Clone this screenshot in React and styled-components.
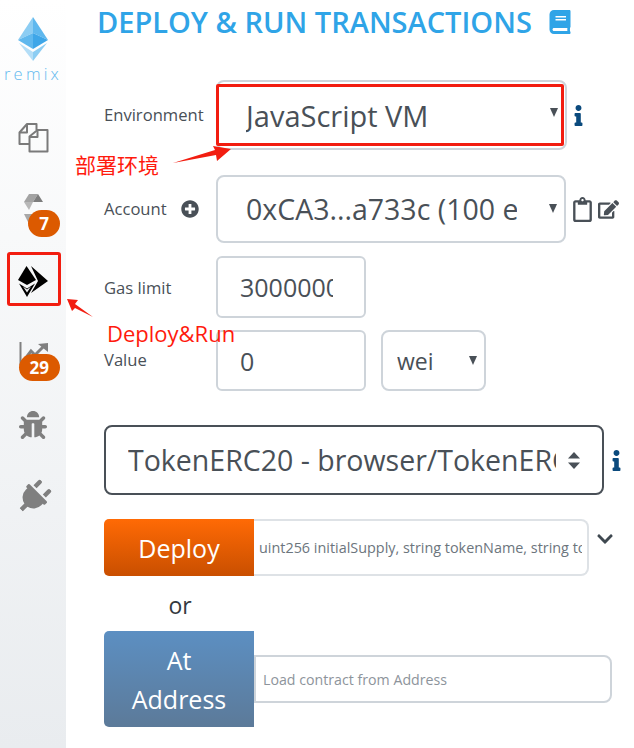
import React from 'react';
import styled, { createGlobalStyle } from 'styled-components';
import {
  FaBook,
  FaBug,
  FaChevronDown,
  FaEdit,
  FaInfo,
  FaPlug,
  FaPlusCircle,
  FaRegClipboard,
} from 'react-icons/fa';

const GlobalStyle = createGlobalStyle`
  html, body {
    margin: 0;
    padding: 0;
    background: #fff;
    font-family: "Open Sans", "Noto Sans CJK SC", sans-serif;
    color: #495057;
  }
  * { box-sizing: border-box; }
`;

const Page = styled.div`
  position: relative;
  display: flex;
  width: 634px;
  height: 748px;
  overflow: hidden;
`;

const Sidebar = styled.nav`
  width: 66px;
  flex: none;
  background: linear-gradient(180deg, #ffffff 0%, #e9ecef 100%);
`;

const Logo = styled.div`
  height: 101px;
  padding-top: 17px;
  display: flex;
  flex-direction: column;
  align-items: center;
`;

const LogoText = styled.div`
  margin-top: 3px;
  font-size: 16.5px;
  line-height: 20px;
  letter-spacing: 3.2px;
  font-weight: 300;
  color: #63b9ee;
`;

const NavItem = styled.div`
  position: relative;
  height: 72px;
  display: flex;
  align-items: center;
  justify-content: center;
  color: #7f7f7f;
  font-size: ${p => p.$size || 30}px;
`;

const PlugIcon = styled(FaPlug)`
  transform: rotate(45deg);
`;

const DeploySvg = styled.svg`
  margin-top: 2px;
`;

const Badge = styled.span`
  position: absolute;
  right: 6px;
  top: 37px;
  height: 27px;
  min-width: 32px;
  padding: 0 11px;
  border-radius: 14px;
  background: #dc5a00;
  color: #fff;
  font-size: 17px;
  font-weight: 700;
  line-height: 27px;
  text-align: center;
`;

const ActiveBox = styled.div`
  position: absolute;
  left: 7px;
  top: 7px;
  width: 54px;
  height: 54px;
  border: 3px solid #f21d10;
  border-radius: 3px;
`;

const Main = styled.main`
  flex: 1;
  padding-left: 38px;
  min-width: 0;
`;

const Title = styled.h1`
  margin: 0 0 0 -7px;
  height: 43px;
  display: flex;
  align-items: center;
  gap: 16px;
  color: #2fa4e7;
  font-size: 29px;
  font-weight: 600;
  line-height: 43px;
  white-space: nowrap;

  svg {
    font-size: 24px;
  }
`;

const Row = styled.div`
  display: flex;
  align-items: center;
  margin-top: ${p => p.$mt}px;
`;

const Label = styled.label`
  width: 112px;
  flex: none;
  display: flex;
  align-items: center;
  gap: 14px;
  font-size: 16.6px;
  line-height: 20px;
  color: #495057;
  transform: translateY(${p => p.$shift || 0}px);

  svg {
    font-size: 18px;
  }
`;

const SelectBox = styled.div`
  position: relative;
  width: ${p => p.$w}px;
  height: ${p => p.$h}px;
  flex: none;
  display: flex;
  align-items: center;
  padding-left: ${p => p.$pad}px;
  padding-right: ${p => p.$padRight || 34}px;
  border: 2px solid ${p => p.$dark ? '#495057' : '#ced4da'};
  border-radius: 8px;
  background: #fff;
  font-size: ${p => p.$fs || 29}px;
  color: #495057;
  white-space: nowrap;
`;

const SelectText = styled.span`
  display: block;
  overflow: hidden;
  white-space: nowrap;
`;

const Caret = styled.span`
  position: absolute;
  right: 7px;
  top: ${p => p.$top || 26}px;
  width: 0;
  height: 0;
  border-left: 4.5px solid transparent;
  border-right: 4.5px solid transparent;
  border-top: 9px solid #495057;
`;

const SortCaret = styled.span`
  position: absolute;
  right: 22px;
  top: 25px;
  display: flex;
  color: #495057;
`;

const TextInput = styled.input`
  width: ${p => p.$w}px;
  height: ${p => p.$h}px;
  flex: none;
  padding: 0 31px 0 22px;
  border: 2px solid #ced4da;
  border-radius: 6px;
  background: #fff;
  font-family: inherit;
  font-size: 25px;
  color: #495057;
  outline: none;
`;

const UnitGap = styled.div`
  width: 15px;
  flex: none;
`;

const SideIcons = styled.div`
  display: flex;
  align-items: center;
  gap: 3px;
  margin-left: 4px;
  color: #495057;
`;

const ClipboardIcon = styled(FaRegClipboard)`
  font-size: 25px;
`;

const EditIcon = styled(FaEdit)`
  font-size: 21px;
`;

const InfoIcon = styled(FaInfo)`
  margin-left: ${p => p.$ml}px;
  font-size: 21px;
  color: #0b4a7d;
`;

const ActionButton = styled.button`
  width: 150px;
  height: ${p => p.$h}px;
  flex: none;
  border: none;
  border-radius: 5px 0 0 5px;
  padding: 2px 20px 0;
  background: ${p => p.$bg};
  color: #fff;
  font-family: inherit;
  font-size: 25px;
  line-height: 39px;
`;

const ArgsInput = styled.input`
  width: ${p => p.$w}px;
  height: ${p => p.$h}px;
  flex: none;
  border: 2px solid ${p => p.$border};
  border-left: ${p => p.$noLeft ? 'none' : `2px solid ${p.$border}`};
  border-radius: 0 8px 8px 0;
  padding: 0 5px 0 ${p => p.$pad}px;
  background: #fff;
  font-family: inherit;
  font-size: ${p => p.$fs}px;
  outline: none;
  color: #6c757d;

  &::placeholder {
    color: #8d949b;
    opacity: 1;
  }
`;

const Chevron = styled(FaChevronDown)`
  align-self: flex-start;
  margin: 11px 0 0 7px;
  font-size: 18px;
  color: #3f4850;
`;

const OrText = styled.div`
  width: 150px;
  height: 55px;
  padding-left: 2px;
  text-align: center;
  font-size: 23px;
  line-height: 59px;
  color: #343a40;
`;

const RedBox = styled.div`
  position: absolute;
  left: 216px;
  top: 84px;
  width: 348px;
  height: 62px;
  border: 3px solid #f21d10;
  border-radius: 2px;
`;

const Note = styled.span`
  position: absolute;
  left: ${p => p.$x}px;
  top: ${p => p.$y}px;
  color: #ff1a0d;
  font-size: ${p => p.$fs}px;
  line-height: 28px;
  white-space: nowrap;
`;

const ArrowLayer = styled.svg`
  position: absolute;
  left: 0;
  top: 0;
  pointer-events: none;
`;

function EthLogo() {
  return (
    <svg width="30" height="44" viewBox="0 0 30 44">
      <polygon points="15,0 0,23 15,16" fill="#8ccdf3" />
      <polygon points="15,0 30,23 15,16" fill="#5fb8ee" />
      <polygon points="15,16 0,23 15,32" fill="#5fb8ee" />
      <polygon points="15,16 30,23 15,32" fill="#3ea6e8" />
      <polygon points="1,26 15,44 15,35" fill="#b4def7" />
      <polygon points="29,26 15,44 15,35" fill="#8ccdf3" />
    </svg>
  );
}

function CopyIcon() {
  return (
    <svg width="31" height="31" viewBox="0 0 31 31" fill="none" stroke="#7a7a7a" strokeWidth="2" strokeLinejoin="round">
      <path d="M18.5 8V2H9L1.5 10.5V22H11" />
      <path d="M9 2.5V10.5H1.5" />
      <path d="M11.5 14.5L19.5 8H29.5V29.5H11.5Z" />
      <path d="M19.5 8V15H11.5" />
    </svg>
  );
}

function SolidityIcon() {
  return (
    <svg width="19" height="30" viewBox="0 0 19 30">
      <polygon points="5,0 14,0 9,8 0,8" fill="#a3a3a3" />
      <polygon points="14,0 19,8 9,8" fill="#7d7d7d" />
      <polygon points="0,8 9,8 5,16" fill="#b8b8b8" />
      <polygon points="0,20 10,20 5,30" fill="#a8a8a8" />
      <polygon points="10,20 19,20 14,30" fill="#8b8b8b" />
    </svg>
  );
}

function DeployIcon() {
  return (
    <DeploySvg width="31" height="32" viewBox="7 12 31 32">
      <polygon points="15.5,12 7,26 16,31 25,26" fill="#000" />
      <polygon points="8,29.5 16,34.5 24,29.5 16,43" fill="#000" />
      <polygon points="12,32.5 16,35.5 20,32.5 16,38.5" fill="#f0f1f3" />
      <polygon points="20,12 37,27 20,39 27,27" fill="#000" />
    </DeploySvg>
  );
}

function AnalysisIcon() {
  return (
    <svg width="29" height="23" viewBox="0 0 29 23" fill="none">
      <path d="M1.5 0V23" stroke="#808080" strokeWidth="2" />
      <path d="M6 17L12 9L16 13L24 5" stroke="#808080" strokeWidth="3" />
      <polygon points="19,2 29,1 29,10" fill="#808080" />
    </svg>
  );
}

function SortIcon() {
  return (
    <svg width="12" height="17" viewBox="0 0 12 17">
      <polygon points="6,0 12,6.5 0,6.5" fill="currentColor" />
      <polygon points="0,10.5 12,10.5 6,17" fill="currentColor" />
    </svg>
  );
}

export default function App() {
  return (
    <Page>
      <GlobalStyle />
      <Sidebar>
        <Logo>
          <EthLogo />
          <LogoText>remix</LogoText>
        </Logo>
        <NavItem><CopyIcon /></NavItem>
        <NavItem>
          <SolidityIcon />
          <Badge>7</Badge>
        </NavItem>
        <NavItem>
          <DeployIcon />
          <ActiveBox />
        </NavItem>
        <NavItem>
          <AnalysisIcon />
          <Badge>29</Badge>
        </NavItem>
        <NavItem $size={28}><FaBug /></NavItem>
        <NavItem $size={35}><PlugIcon /></NavItem>
      </Sidebar>

      <Main>
        <Title>
          DEPLOY &amp; RUN TRANSACTIONS
          <FaBook />
        </Title>

        <Row $mt={37}>
          <Label>Environment</Label>
          <SelectBox $w={351} $h={70} $pad={28}>
            <SelectText>JavaScript VM</SelectText>
            <Caret $top={26} />
          </SelectBox>
          <InfoIcon $ml={1} />
        </Row>

        <Row $mt={25}>
          <Label>Account <FaPlusCircle /></Label>
          <SelectBox $w={350} $h={68} $pad={28} $padRight={47} $fs={28.5}>
            <SelectText>0xCA3...a733c (100 ether)</SelectText>
            <Caret $top={27} />
          </SelectBox>
          <SideIcons>
            <ClipboardIcon />
            <EditIcon />
          </SideIcons>
        </Row>

        <Row $mt={13}>
          <Label $shift={1}>Gas limit</Label>
          <TextInput $w={150} $h={62} readOnly value="3000000" />
        </Row>

        <Row $mt={12}>
          <Label $shift={-1}>Value</Label>
          <TextInput $w={150} $h={61} readOnly value="0" />
          <UnitGap />
          <SelectBox $w={105} $h={61} $pad={14} $fs={23}>
            <SelectText>wei</SelectText>
            <Caret $top={24} />
          </SelectBox>
        </Row>

        <Row $mt={34}>
          <SelectBox $w={500} $h={70} $pad={22} $padRight={46} $dark $fs={28.5}>
            <SelectText>TokenERC20 - browser/TokenERC20.sol</SelectText>
            <SortCaret><SortIcon /></SortCaret>
          </SelectBox>
          <InfoIcon $ml={2} />
        </Row>

        <Row $mt={24}>
          <ActionButton $h={57} $bg="linear-gradient(180deg, #ff6a05 0%, #c94f00 100%)">Deploy</ActionButton>
          <ArgsInput $w={335} $h={57} $border="#dee2e6" $noLeft $pad={5} $fs={14.4} readOnly value="uint256 initialSupply, string tokenName, string tokenSymbol" />
          <Chevron />
        </Row>

        <OrText>or</OrText>

        <Row $mt={0}>
          <ActionButton $h={96} $bg="linear-gradient(180deg, #5c8fc2 0%, #5c7a99 100%)">At Address</ActionButton>
          <ArgsInput $w={358} $h={48} $border="#ced4da" $pad={7} $fs={14.2} placeholder="Load contract from Address" readOnly />
        </Row>
      </Main>

      <RedBox />
      <Note $x={75} $y={151} $fs={21}>部署环境</Note>
      <Note $x={107} $y={319} $fs={22}>Deploy&amp;Run</Note>
      <ArrowLayer width="634" height="748" viewBox="0 0 634 748">
        <polygon points="173,163 215,150 213,146 231,149 217,161 216,155" fill="#f21d10" />
        <polygon points="67,299 78,300 75,304 93,317 75,308 72,311" fill="#f21d10" />
      </ArrowLayer>
    </Page>
  );
}
